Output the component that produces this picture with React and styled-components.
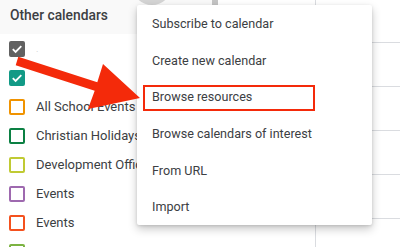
import React from "react";
import styled, { createGlobalStyle, css } from "styled-components";

const GlobalStyle = createGlobalStyle`
  html, body {
    margin: 0;
    padding: 0;
    background: #ffffff;
    font-family: Roboto, "Liberation Sans", sans-serif;
  }
`;

const Page = styled.div`
  position: relative;
  display: flex;
  width: 400px;
  height: 247px;
  overflow: hidden;
  background: #ffffff;
`;

const Sidebar = styled.div`
  width: 203px;
  padding-left: 9px;
  flex-shrink: 0;
`;

const SectionHeader = styled.div`
  position: relative;
  height: 34px;
  display: flex;
  align-items: flex-start;
  padding-top: 6px;
  box-sizing: border-box;
  background: #f9f9f9;
  margin-left: -9px;
  padding-left: 10px;
`;

const Title = styled.div`
  font-size: 13.8px;
  line-height: 18px;
  font-weight: 500;
  color: #3c4043;
`;

const HoverCircle = styled.div`
  position: absolute;
  left: 132px;
  top: -35px;
  width: 40px;
  height: 40px;
  border-radius: 50%;
  background: #d4d4d4;
`;

const CalendarRow = styled.div`
  height: 29px;
  display: flex;
  align-items: center;
  gap: 11px;
`;

const Box = styled.div`
  width: 16px;
  height: 16px;
  box-sizing: border-box;
  border: 2px solid ${({ color }) => color};
  border-radius: 2px;
  flex-shrink: 0;
  display: flex;
  align-items: center;
  justify-content: center;
  ${({ checked, color }) =>
    checked &&
    css`
      background: ${color};
    `}
`;

const Label = styled.span`
  font-size: 13px;
  color: #3c4043;
  white-space: nowrap;
  ${({ faint }) =>
    faint &&
    css`
      color: #c8c8c8;
      font-size: 9px;
    `}
`;

const Scrollbar = styled.div`
  width: 6px;
  flex-shrink: 0;
`;

const Thumb = styled.div`
  height: 5px;
  background: #c4c4c4;
`;

const Grid = styled.div`
  flex: 1;
  display: flex;
`;

const TimeColumn = styled.div`
  width: 97px;
  flex-shrink: 0;
`;

const DayColumn = styled.div`
  flex: 1;
  border-left: 1px solid #dadce0;
`;

const Slot = styled.div`
  height: ${({ h }) => h}px;
  border-bottom: 1px solid #dadce0;
  box-sizing: border-box;
`;

const Menu = styled.div`
  position: absolute;
  left: 137px;
  top: 5px;
  width: 235px;
  background: #ffffff;
  border-radius: 2px;
  box-shadow: 0 4px 10px rgba(0, 0, 0, 0.22), 0 1px 3px rgba(0, 0, 0, 0.12);
  z-index: 1;
`;

const MenuItem = styled.div`
  position: relative;
  height: 36.7px;
  display: flex;
  align-items: center;
  padding-left: 15px;
  font-size: 12.6px;
  color: #3c4043;
  white-space: nowrap;
  ${({ highlighted }) =>
    highlighted &&
    css`
      &::after {
        content: "";
        position: absolute;
        left: 6px;
        top: 7px;
        width: 172px;
        height: 26px;
        box-sizing: border-box;
        border: 2px solid #f42a0a;
      }
    `}
`;

const ArrowLayer = styled.svg`
  position: absolute;
  left: 0;
  top: 0;
  z-index: 2;
  pointer-events: none;
`;

const calendars = [
  { name: ".", color: "#616161", checked: true, faint: true },
  { name: "", color: "#129a86", checked: true },
  { name: "All School Events", color: "#f09300" },
  { name: "Christian Holidays", color: "#0b8043" },
  { name: "Development Office", color: "#c0ca33" },
  { name: "Events", color: "#9e69af" },
  { name: "Events", color: "#f4511e" },
  { name: "", color: "#7cb342" },
];

const menuItems = [
  "Subscribe to calendar",
  "Create new calendar",
  "Browse resources",
  "Browse calendars of interest",
  "From URL",
  "Import",
];

const Check = () => (
  <svg width="12" height="12" viewBox="0 0 12 12">
    <path d="M1.8 6.2 L4.6 9 L10.3 3.2" fill="none" stroke="#fff" strokeWidth="1.8" />
  </svg>
);

export default function App() {
  return (
    <>
      <GlobalStyle />
      <Page>
        <Sidebar>
          <SectionHeader>
            <HoverCircle />
            <Title>Other calendars</Title>
          </SectionHeader>
          {calendars.map((c, i) => (
            <CalendarRow key={i}>
              <Box color={c.color} checked={c.checked}>
                {c.checked && <Check />}
              </Box>
              <Label faint={c.faint}>{c.name}</Label>
            </CalendarRow>
          ))}
        </Sidebar>
        <Scrollbar>
          <Thumb />
        </Scrollbar>
        <Grid>
          <TimeColumn />
          <DayColumn>
            <Slot h={43} />
            <Slot h={44} />
            <Slot h={44} />
            <Slot h={44} />
            <Slot h={44} />
          </DayColumn>
        </Grid>
        <Menu>
          {menuItems.map((m) => (
            <MenuItem key={m} highlighted={m === "Browse resources"}>
              {m}
            </MenuItem>
          ))}
        </Menu>
        <ArrowLayer width="400" height="247" viewBox="0 0 400 247">
          <polygon
            points="18.3,56.7 97.3,82.2 103,64 140,98 88,109 94.7,90.8 15.7,65.3"
            fill="#f42a0a"
          />
        </ArrowLayer>
      </Page>
    </>
  );
}
